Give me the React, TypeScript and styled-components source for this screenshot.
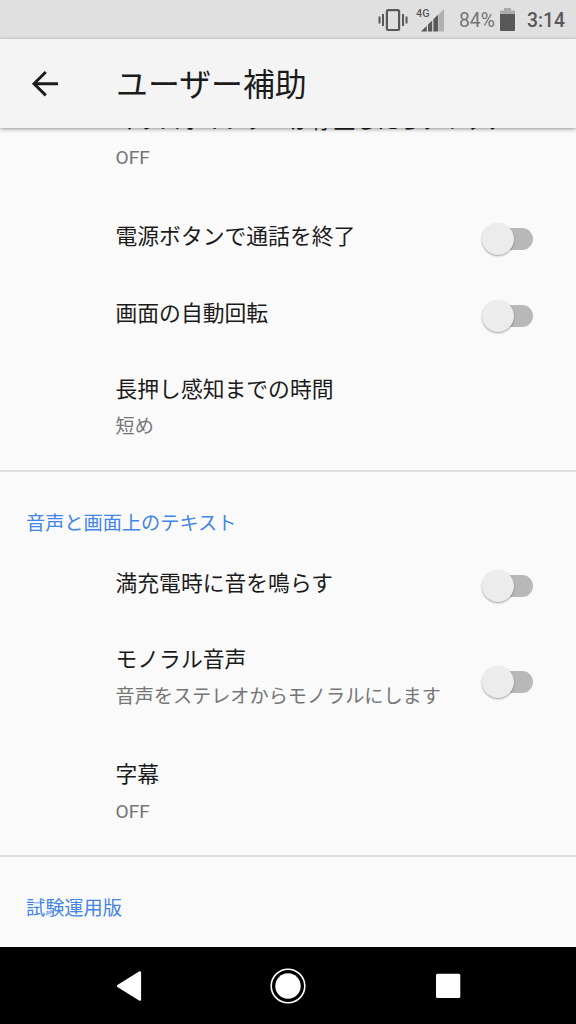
import React from "react";
import styled, { createGlobalStyle } from "styled-components";

const GlobalStyle = createGlobalStyle`
  * { box-sizing: border-box; }
  body { margin: 0; background: #fafafa; }
`;

const Screen = styled.div`
  width: 576px;
  height: 1024px;
  display: flex;
  flex-direction: column;
  overflow: hidden;
  background: #fafafa;
  color: #1b1b1b;
  font-family: Roboto, "Noto Sans CJK JP", sans-serif;
`;

const StatusBar = styled.header`
  flex: none;
  height: 39px;
  display: flex;
  align-items: center;
  justify-content: flex-end;
  padding-right: 11px;
  background: #e0e0e0;
  color: #5a5a5a;
`;

const StatusText = styled.span<{ $light?: boolean; $width: number }>`
  width: ${(p) => p.$width}px;
  font-size: 19.3px;
  font-weight: ${(p) => (p.$light ? 400 : 500)};
  line-height: 24px;
  margin-top: 2px;
  color: ${(p) => (p.$light ? "#757575" : "#585858")};
  white-space: nowrap;
`;

const StatusIcon = styled.svg<{ $gap: number }>`
  flex: none;
  display: block;
  margin-right: ${(p) => p.$gap}px;
`;

const AppBar = styled.div`
  flex: none;
  position: relative;
  z-index: 1;
  height: 89px;
  display: flex;
  align-items: center;
  padding-left: 30px;
  background: #f4f4f4;
  box-shadow: 0 1px 4px rgba(0, 0, 0, 0.42);
`;

const BackButton = styled.button`
  width: 30px;
  height: 30px;
  padding: 0;
  border: 0;
  background: none;
  margin-right: 56px;
`;

const Title = styled.h1`
  margin: 2px 0 0;
  font-size: 31.9px;
  font-weight: 400;
  line-height: 46px;
`;

const List = styled.main`
  flex: 1;
  min-height: 0;
  overflow: hidden;
`;

const Section = styled.section<{ $scrolled?: boolean }>`
  margin-top: ${(p) => (p.$scrolled ? "-42px" : "0")};
  & + & { border-top: 2px solid #dedede; }
`;

const Category = styled.h2`
  margin: 0;
  height: 76px;
  padding: 38px 0 0 26px;
  font-size: 19.2px;
  font-weight: 400;
  line-height: 28px;
  color: #4285e8;
`;

const Row = styled.div<{ $height: number }>`
  height: ${(p) => p.$height}px;
  display: flex;
  align-items: center;
  justify-content: space-between;
  padding: 0 42px 0 115.5px;
`;

const Labels = styled.div<{ $double: boolean }>`
  display: flex;
  flex-direction: column;
  gap: 7px;
  white-space: nowrap;
  margin-top: ${(p) => (p.$double ? -11 : -6)}px;
`;

const Label = styled.div`
  font-size: 21.8px;
  line-height: 32px;
`;

const Summary = styled.div`
  font-size: 19.15px;
  line-height: 28px;
  color: #757575;
`;

const Switch = styled.div`
  flex: none;
  width: 52px;
  height: 34px;
  display: flex;
  align-items: center;
  margin-top: -2px;
`;

const Thumb = styled.span`
  flex: none;
  z-index: 1;
  width: 32px;
  height: 32px;
  border-radius: 50%;
  background: #ececec;
  box-shadow: 0 1px 2px rgba(0, 0, 0, 0.36);
`;

const Track = styled.span`
  flex: none;
  width: 39px;
  height: 22px;
  margin-left: -20px;
  border-radius: 11px;
  background: #b8b8b8;
`;

const NavBar = styled.nav`
  flex: none;
  height: 77px;
  display: flex;
  align-items: center;
  justify-content: space-around;
  padding: 0 48px;
  background: #000;
`;

function Toggle() {
  return (
    <Switch role="switch" aria-checked={false}>
      <Thumb />
      <Track />
    </Switch>
  );
}

type SettingProps = { label: string; summary?: string; toggle?: boolean; height: number };

function Setting({ label, summary, toggle, height }: SettingProps) {
  return (
    <Row $height={height}>
      <Labels $double={Boolean(summary)}>
        <Label>{label}</Label>
        {summary && <Summary>{summary}</Summary>}
      </Labels>
      {toggle && <Toggle />}
    </Row>
  );
}

export default function App() {
  return (
    <Screen>
      <GlobalStyle />
      <StatusBar>
        <StatusIcon $gap={8} width="30" height="26" viewBox="0 0 30 26">
          <rect x="8.9" y="3.2" width="12.2" height="19.8" rx="1.4" fill="none" stroke="#585858" strokeWidth="2.2" />
          <path d="M1.5 9.5v7M5 7v12M25 7v12M28.5 9.5v7" stroke="#585858" strokeWidth="2" />
        </StatusIcon>
        <StatusIcon $gap={13} width="30" height="30" viewBox="0 0 30 30">
          <text x="0" y="11.5" fontSize="10.8" fontWeight="500" fill="#585858">4G</text>
          <path d="M28 4v22.500h-5V9z" fill="#b0b0b0" />
          <path d="M5 26.500L10.800 20.800v5.700zM12 26.500v-6.900l4.200-4.200v11.100zM17.400 26.500V14.200l4.800-4.800v17.100z" fill="#585858" />
        </StatusIcon>
        <StatusText $light $width={41}>84%</StatusText>
        <StatusIcon $gap={12} width="15" height="24" viewBox="0 0 15 24">
          <path d="M4 0h7v2.500h4V6H0V2.500h4z" fill="#ababab" />
          <path d="M0 6h15v16a1 1 0 0 1-1 1H1a1 1 0 0 1-1-1z" fill="#585858" />
        </StatusIcon>
        <StatusText $width={38}>3:14</StatusText>
      </StatusBar>
      <AppBar>
        <BackButton aria-label="戻る">
          <svg width="30" height="30" viewBox="0 0 30 30" fill="none" stroke="#1b1b1b" strokeWidth="2.9">
            <path d="M28 14.700H4M15.800 3L4 14.700 15.800 26.400" />
          </svg>
        </BackButton>
        <Title>ユーザー補助</Title>
      </AppBar>
      <List>
        <Section $scrolled>
          <Setting label="マウスポインターが停止したらクリック" summary="OFF" height={115} />
          <Setting label="電源ボタンで通話を終了" toggle height={77} />
          <Setting label="画面の自動回転" toggle height={77} />
          <Setting label="長押し感知までの時間" summary="短め" height={115} />
        </Section>
        <Section>
          <Category>音声と画面上のテキスト</Category>
          <Setting label="満充電時に音を鳴らす" toggle height={77} />
          <Setting label="モノラル音声" summary="音声をステレオからモノラルにします" toggle height={115} />
          <Setting label="字幕" summary="OFF" height={115} />
        </Section>
        <Section>
          <Category>試験運用版</Category>
        </Section>
      </List>
      <NavBar>
        <svg width="36" height="36" viewBox="0 0 36 36">
          <path d="M30 4.300v27.400L8 18z" fill="#fff" stroke="#fff" strokeWidth="2.200" strokeLinejoin="round" />
        </svg>
        <svg width="36" height="36" viewBox="0 0 36 36">
          <circle cx="18" cy="18" r="16.800" fill="none" stroke="#fff" strokeWidth="1.600" />
          <circle cx="18" cy="18" r="12.700" fill="#fff" />
        </svg>
        <svg width="36" height="36" viewBox="0 0 36 36">
          <rect x="6" y="5.700" width="24.300" height="24.300" rx="1.500" fill="#fff" />
        </svg>
      </NavBar>
    </Screen>
  );
}
